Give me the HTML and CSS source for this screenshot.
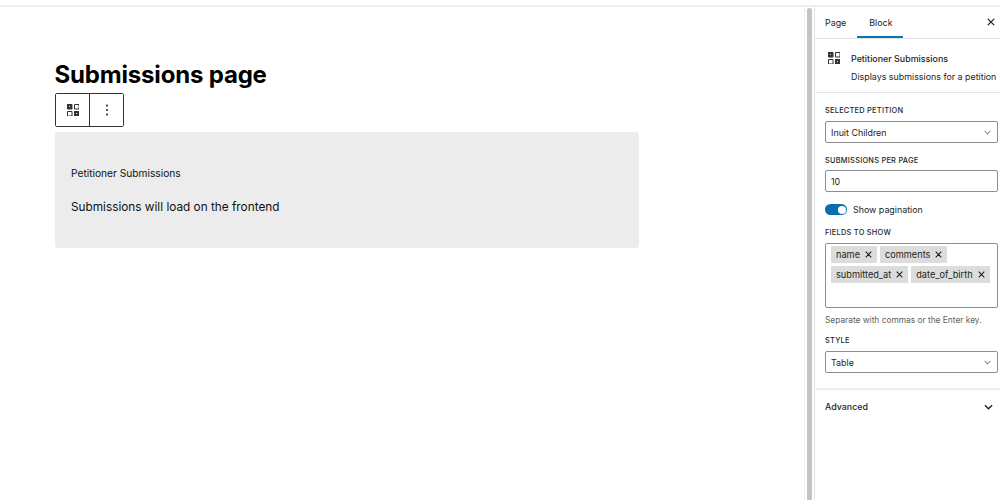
FILE: index.html
```html
<!DOCTYPE html>
<html lang="en">
<head>
<meta charset="utf-8">
<title>Submissions page</title>
<link rel="stylesheet" href="styles.css">
</head>
<body>
<div class="topbar"></div>
<div class="workspace">
  <main class="canvas">
    <h1 class="page-title">Submissions page</h1>
    <div class="block-toolbar">
      <button class="tool-btn">
        <svg class="qr" viewBox="0 0 12 12" width="12" height="12"><path d="M.5.5h4.500v4.500H.5zM7.500.5H12v4.500H7.500zM.5 7.500h4.500V12H.5z" fill="none" stroke="#333"/><path d="M0 0h5v5H0zM7 7h5v5H7z" fill="#333"/><path d="M2 2h1v1H2zM9 9h1v1H9z" fill="#eee"/></svg>
      </button>
      <button class="tool-btn">
        <svg viewBox="0 0 4 12" width="4" height="12"><circle cx="2" cy="1.500" r="1" fill="#1e1e1e"/><circle cx="2" cy="6" r="1" fill="#1e1e1e"/><circle cx="2" cy="10.500" r="1" fill="#1e1e1e"/></svg>
      </button>
    </div>
    <section class="placeholder">
      <p class="ph-title">Petitioner Submissions</p>
      <p class="ph-text">Submissions will load on the frontend</p>
    </section>
  </main>
  <div class="scroll-track"><div class="scroll-thumb"></div></div>
  <aside class="sidebar">
    <div class="tabs">
      <span class="tab">Page</span>
      <span class="tab active">Block</span>
      <svg class="close" viewBox="0 0 10 10" width="8" height="8"><path d="M1 1l8 8M9 1l-8 8" stroke="#1e1e1e" stroke-width="1.500"/></svg>
    </div>
    <div class="block-card">
      <svg class="qr" viewBox="0 0 12 12" width="12" height="12"><path d="M.5.500h4.500v4.500H.5zM7.500.5H12v4.500H7.500zM.5 7.500h4.500V12H.5z" fill="none" stroke="#333"/><path d="M0 0h5v5H0zM7 7h5v5H7z" fill="#333"/><path d="M2 2h1v1H2zM9 9h1v1H9z" fill="#eee"/></svg>
      <div class="card-text">
        <div class="card-title">Petitioner Submissions</div>
        <div class="card-desc">Displays submissions for a petition</div>
      </div>
    </div>
    <div class="settings">
      <div class="label">SELECTED PETITION</div>
      <div class="field select">Inuit Children
        <svg class="chev" viewBox="0 0 10 6" width="7" height="5"><path d="M1 1l4 4 4-4" fill="none" stroke="#444" stroke-width="1.300"/></svg>
      </div>
      <div class="label per-page">SUBMISSIONS PER PAGE</div>
      <div class="field">10</div>
      <div class="toggle-row">
        <span class="toggle"><span class="knob"></span></span>
        <span>Show pagination</span>
      </div>
      <div class="label">FIELDS TO SHOW</div>
      <div class="tokens">
        <span class="token">name<svg viewBox="0 0 10 10" width="7" height="7"><path d="M1 1l8 8M9 1l-8 8" stroke="#1e1e1e" stroke-width="1.500"/></svg></span>
        <span class="token">comments<svg viewBox="0 0 10 10" width="7" height="7"><path d="M1 1l8 8M9 1l-8 8" stroke="#1e1e1e" stroke-width="1.500"/></svg></span>
        <span class="token">submitted_at<svg viewBox="0 0 10 10" width="7" height="7"><path d="M1 1l8 8M9 1l-8 8" stroke="#1e1e1e" stroke-width="1.500"/></svg></span>
        <span class="token">date_of_birth<svg viewBox="0 0 10 10" width="7" height="7"><path d="M1 1l8 8M9 1l-8 8" stroke="#1e1e1e" stroke-width="1.500"/></svg></span>
      </div>
      <div class="help">Separate with commas or the Enter key.</div>
      <div class="label style-label">STYLE</div>
      <div class="field select">Table
        <svg class="chev" viewBox="0 0 10 6" width="7" height="5"><path d="M1 1l4 4 4-4" fill="none" stroke="#444" stroke-width="1.300"/></svg>
      </div>
    </div>
    <div class="advanced">
      <span>Advanced</span>
      <svg viewBox="0 0 10 6" width="9" height="6"><path d="M1 1l4 4 4-4" fill="none" stroke="#1e1e1e" stroke-width="1.500"/></svg>
    </div>
  </aside>
</div>
</body>
</html>
```

FILE: styles.css
```css
* { box-sizing: border-box; }
html, body { margin: 0; height: 100%; }
body {
  width: 1000px;
  height: 500px;
  overflow: hidden;
  background: #fff;
  color: #1e1e1e;
  font-family: Inter, "Liberation Sans", sans-serif;
  display: flex;
  flex-direction: column;
}
.topbar { height: 7px; flex: none; border-bottom: 2px solid #efefef; }
.workspace { flex: 1; display: flex; min-height: 0; }
.canvas { width: 804px; flex: none; padding: 53px 0 0 55px; }
.page-title {
  margin: 0 0 0 -0.5px;
  font-size: 24px;
  line-height: 30px;
  font-weight: 700;
  color: #000;
  letter-spacing: -0.18px;
}
.block-toolbar {
  display: flex;
  width: 69px;
  height: 34px;
  margin-top: 3px;
  border: 1px solid #333;
  border-radius: 2px;
}
.tool-btn {
  flex: 1;
  padding: 0;
  background: #fff;
  border: 0;
  display: flex;
  align-items: center;
  justify-content: center;
}
.tool-btn + .tool-btn { border-left: 1px solid #333; }
.placeholder {
  width: 584px;
  height: 116px;
  margin-top: 5px;
  padding: 34px 16px 0;
  background: #ececec;
  border-radius: 3px;
}
.placeholder p { margin: 0; color: #111; }
.ph-title { font-size: 10.2px; line-height: 14px; }
.placeholder .ph-text { font-size: 11.800px; line-height: 18px; margin-top: 18px; }
.scroll-track {
  width: 10px;
  flex: none;
  padding: 1px 0 0 2px;
  border-left: 1px solid #f0f0f0;
}
.scroll-thumb { width: 5px; height: 100%; background: #c4c4c4; border-radius: 3px 3px 0 0; }
.sidebar {
  flex: 1;
  border-left: 1px solid #e4e4e4;
  font-size: 8.900px;
  min-width: 0;
}
.tabs {
  height: 32px;
  display: flex;
  align-items: center;
  position: relative;
  padding-left: 10px;
  border-bottom: 1px solid #e4e4e4;
  gap: 23px;
}
.tab { line-height: 30px; }
.tab.active { position: relative; }
.tab.active::after {
  content: "";
  position: absolute;
  left: -12px;
  right: -10px;
  bottom: 0;
  height: 2px;
  background: #0a75b0;
}
.close { position: absolute; right: 5px; top: 11px; }
.block-card {
  height: 54px;
  display: flex;
  gap: 11px;
  padding: 13px 0 0 13px;
  border-bottom: 1px solid #e6e6e6;
}
.qr { flex: none; }
.card-title { font-weight: 500; line-height: 13px; }
.card-desc { margin-top: 5px; line-height: 13px; white-space: nowrap; }
.settings {
  display: flow-root;
  padding: 0 2px 0 10px;
  height: 297px;
  border-bottom: 2px solid #eee;
}
.label {
  font-size: 7.400px;
  font-weight: 500;
  line-height: 10px;
  letter-spacing: 0.25px;
  margin: 13px 0 5px;
}
.label.per-page { margin-bottom: 4px; }
.label.style-label { margin-top: 10px; }
.field {
  height: 22px;
  border: 1px solid #8f8f8f;
  border-radius: 2px;
  padding: 0 5px;
  display: flex;
  align-items: center;
  justify-content: space-between;
  font-size: 8.900px;
}
.chev { margin-right: 1px; }
.toggle-row { display: flex; align-items: center; gap: 6px; height: 11px; margin-top: 12px; }
.toggle {
  width: 22px;
  height: 11px;
  border-radius: 6px;
  background: #0a6fb0;
  position: relative;
  flex: none;
}
.knob {
  position: absolute;
  right: 1px;
  top: 1.500px;
  width: 8px;
  height: 8px;
  border-radius: 50%;
  background: #fff;
}
.tokens {
  height: 65px;
  border: 1px solid #8f8f8f;
  border-radius: 2px;
  padding: 2px 5px;
  display: flex;
  flex-wrap: wrap;
  align-content: flex-start;
  gap: 3px;
}
.token {
  height: 17px;
  background: #dcdcdc;
  display: flex;
  align-items: center;
  gap: 5px;
  padding: 0 5px;
  font-size: 9.200px;
}
.help { font-size: 8.350px; line-height: 12px; margin-top: 6px; color: #5f5f5f; }
.advanced {
  height: 33px;
  display: flex;
  align-items: center;
  justify-content: space-between;
  padding: 0 7px 0 10px;
  font-weight: 500;
}
```
